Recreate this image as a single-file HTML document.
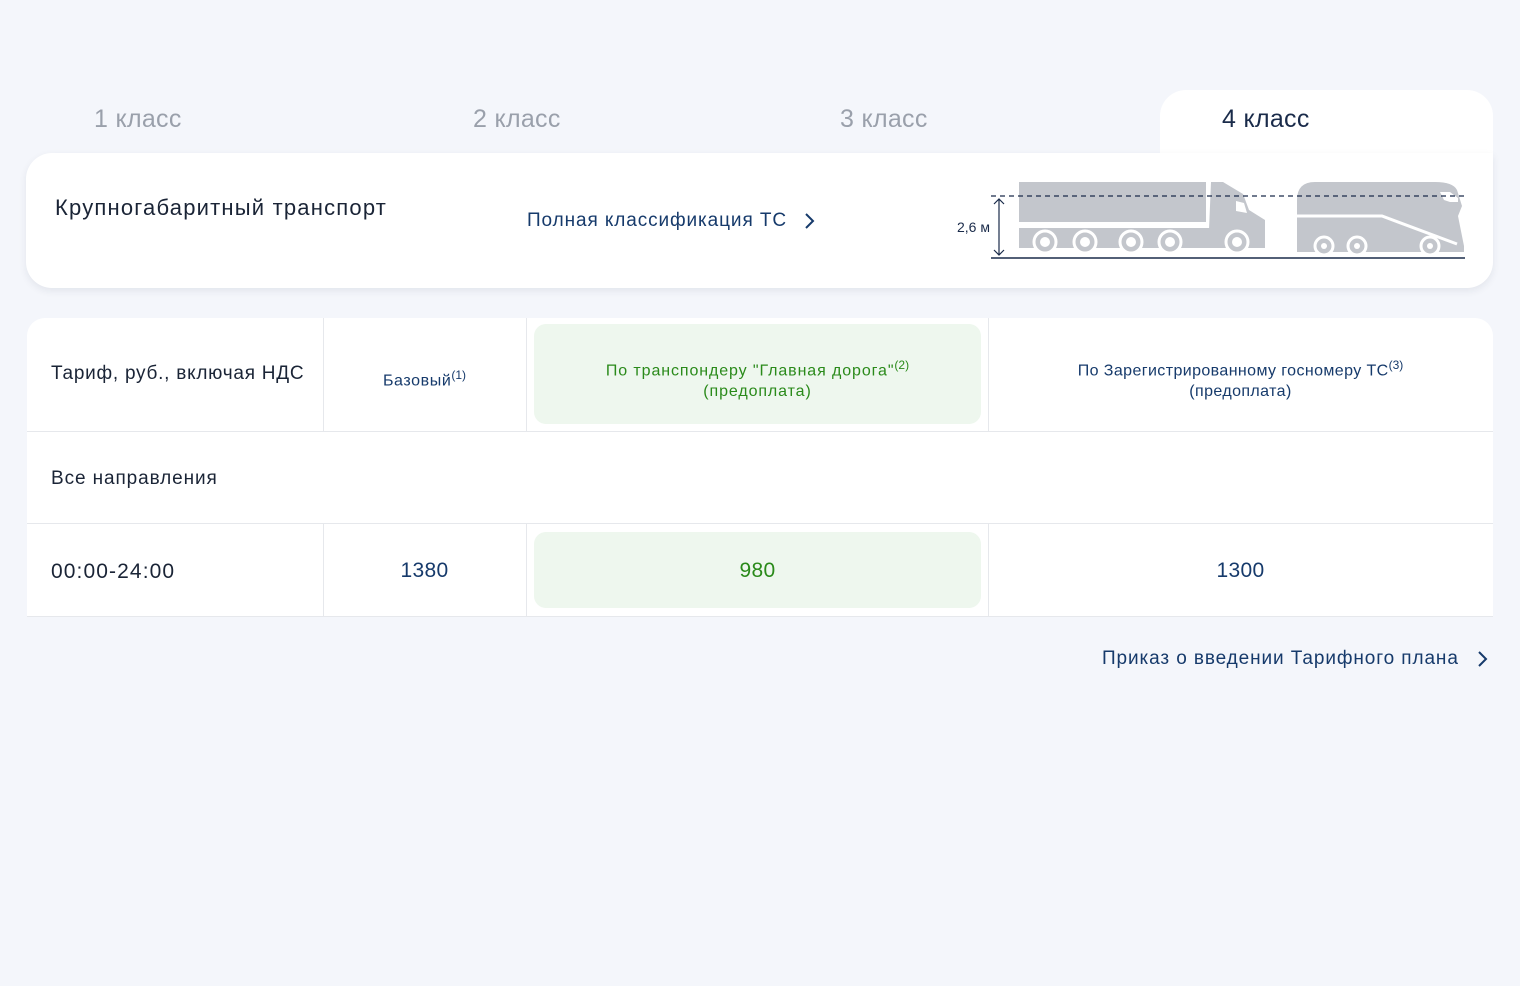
<!DOCTYPE html>
<html><head><meta charset="utf-8"><style>
*{box-sizing:border-box;margin:0;padding:0}
body{width:1520px;height:986px;background:#f4f6fb;font-family:"Liberation Sans","DejaVu Sans",sans-serif;color:#1a2b4a;position:relative;overflow:hidden}
.tab{position:absolute;top:105px;font-size:25px;color:#9aa0ab;letter-spacing:0.3px}
.atab{position:absolute;left:1160px;top:90px;width:333px;height:80px;background:#fff;border-radius:26px 26px 0 0}
.card{position:absolute;left:26px;top:153px;width:1467px;height:135px;background:#fff;border-radius:26px 0 26px 26px;box-shadow:0 3px 8px rgba(30,40,70,.08)}
.abs{position:absolute}
.tbl{position:absolute;left:27px;top:318px;width:1466px;height:299px;background:#fff;border-radius:18px 18px 0 0}
.hl{position:absolute;background:#eef7ee;border-radius:12px}
.vl{position:absolute;width:1px;background:#e6e8ec}
.hr{position:absolute;height:1px;background:#e6e8ec;left:27px;width:1466px}
.c{position:absolute;text-align:center;font-size:16px;line-height:21px;letter-spacing:0.9px}
sup{font-size:12px;letter-spacing:0}
</style></head><body>
<div class="tab" style="left:94px">1 класс</div>
<div class="tab" style="left:473px">2 класс</div>
<div class="tab" style="left:840px">3 класс</div>
<div class="atab"></div>
<div class="card"></div>
<div class="tab" style="left:1222px;color:#1a2b4a">4 класс</div>
<div class="abs" style="left:55px;top:195px;font-size:22px;letter-spacing:1.2px;color:#1a2436">Крупногабаритный транспорт</div>
<div class="abs" style="left:527px;top:210px;font-size:19px;letter-spacing:0.9px;color:#163a6b">Полная классификация ТС</div>
<svg class="abs" style="left:803px;top:212px" width="12" height="18"><path d="M3 2l7 7-7 7" stroke="#163a6b" stroke-width="2" fill="none"/></svg>
<svg class="abs" style="left:0;top:0" width="1520" height="300">
<g fill="#c3c6cc">
<rect x="1019" y="182" width="187" height="40"/>
<path d="M1211 182h12l20 12 6 16 16 10v10h-56z"/>
<rect x="1019" y="228" width="246" height="20"/>
<path d="M1297 200q0-18 18-18h120q18 0 22 8l5 16-4 10 6 30v6h-167z"/>
</g>
<path d="M1236 201l8 2 3 10-11-2z" fill="#fff"/>
<path d="M1440 192h10l8 6v4h-8l-6-2z" fill="#fff"/>
<g fill="#c3c6cc" stroke="#fff" stroke-width="3">
<circle cx="1045" cy="242" r="11"/><circle cx="1085" cy="242" r="11"/><circle cx="1131" cy="242" r="11"/><circle cx="1170" cy="242" r="11"/><circle cx="1237" cy="242" r="11"/>
<circle cx="1324" cy="246" r="9"/><circle cx="1357" cy="246" r="9"/><circle cx="1430" cy="246" r="9"/>
</g>
<g fill="#fff"><circle cx="1045" cy="242" r="5"/><circle cx="1085" cy="242" r="5"/><circle cx="1131" cy="242" r="5"/><circle cx="1170" cy="242" r="5"/><circle cx="1237" cy="242" r="5"/><circle cx="1324" cy="246" r="3"/><circle cx="1357" cy="246" r="3"/><circle cx="1430" cy="246" r="3"/></g>
<path d="M1297 216h85l75 28" stroke="#fff" stroke-width="3" fill="none"/>
<line x1="991" y1="196" x2="1465" y2="196" stroke="#1a2b4a" stroke-dasharray="5 4" stroke-width="1.2"/>
<line x1="991" y1="258" x2="1465" y2="258" stroke="#1a2b4a" stroke-width="1.5"/>
<path d="M999 199v56M994 204l5-5 5 5M994 250l5 5 5-5" stroke="#1a2b4a" fill="none" stroke-width="1.2"/>
<text x="957" y="232" font-size="14" fill="#1a2b4a" font-family="Liberation Sans">2,6 м</text>
</svg>
<div class="tbl"></div>
<div class="hl" style="left:534px;top:324px;width:447px;height:100px"></div>
<div class="hl" style="left:534px;top:532px;width:447px;height:76px"></div>
<div class="vl" style="left:323px;top:318px;height:113px"></div>
<div class="vl" style="left:526px;top:318px;height:113px"></div>
<div class="vl" style="left:988px;top:318px;height:113px"></div>
<div class="vl" style="left:323px;top:524px;height:93px"></div>
<div class="vl" style="left:526px;top:524px;height:93px"></div>
<div class="vl" style="left:988px;top:524px;height:93px"></div>
<div class="hr" style="top:431px"></div>
<div class="hr" style="top:523px"></div>
<div class="hr" style="top:616px"></div>
<div class="abs" style="left:51px;top:363px;font-size:19px;letter-spacing:0.75px;color:#1a2436">Тариф, руб., включая НДС</div>
<div class="c" style="left:323px;width:203px;top:365px;color:#163a6b;letter-spacing:0.6px">Базовый<sup>(1)</sup></div>
<div class="c" style="left:534px;width:447px;top:355px;color:#2a8a1a">По транспондеру "Главная дорога"<sup>(2)</sup><br>(предоплата)</div>
<div class="c" style="left:988px;width:505px;top:355px;color:#163a6b;letter-spacing:0.4px">По Зарегистрированному госномеру ТС<sup>(3)</sup><br>(предоплата)</div>
<div class="abs" style="left:51px;top:468px;font-size:19px;letter-spacing:0.9px;color:#1a2436">Все направления</div>
<div class="abs" style="left:51px;top:560px;font-size:21px;letter-spacing:1.1px;color:#1a2436">00:00-24:00</div>
<div class="c" style="left:323px;width:203px;top:560px;font-size:21px;letter-spacing:0.3px;color:#163a6b">1380</div>
<div class="c" style="left:534px;width:447px;top:560px;font-size:21px;letter-spacing:0.3px;color:#2a8a1a">980</div>
<div class="c" style="left:988px;width:505px;top:560px;font-size:21px;letter-spacing:0.3px;color:#163a6b">1300</div>
<div class="abs" style="left:1102px;top:648px;font-size:19px;letter-spacing:0.9px;color:#163a6b">Приказ о введении Тарифного плана</div>
<svg class="abs" style="left:1476px;top:650px" width="12" height="18"><path d="M3 2l7 7-7 7" stroke="#163a6b" stroke-width="2" fill="none"/></svg>
</body></html>
